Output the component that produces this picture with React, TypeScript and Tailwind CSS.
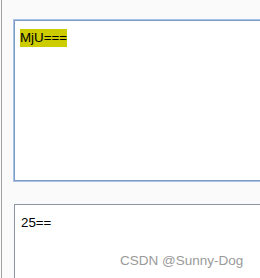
import React from "react";

export default function App() {
  return (
    <div
      className="relative w-[260px] h-[278px] overflow-hidden bg-[#fafafa]"
      style={{ fontFamily: '"Liberation Sans", Arial, sans-serif' }}
    >
      <div className="flex h-full">
        <div className="w-[1px] shrink-0" />
        <div className="w-[1px] shrink-0 bg-[#a3a3a3]" />
        <div className="flex flex-col pl-[11px] pt-[19px] gap-[22px]">
          <div className="w-[260px] h-[163px] border border-[#a9c2e2] shrink-0">
            <div className="h-full border border-[#7c9cc7] bg-white pl-[5px] pt-[4px]">
              <span className="inline-block bg-[#cccc00] text-black text-[13.33px] leading-[18px]">
                MjU===
              </span>
            </div>
          </div>
          <div className="w-[260px] h-[120px] ml-[1px] border border-[#8c93a3] bg-white pl-[6px] pt-[5px] shrink-0">
            <span className="text-black text-[13.33px] leading-[18px]">25==</span>
          </div>
        </div>
      </div>
      <div className="absolute left-[120px] top-[252px] text-[13.5px] leading-[18px] text-[#9a9a9a] whitespace-nowrap">
        CSDN @Sunny-Dog
      </div>
    </div>
  );
}
